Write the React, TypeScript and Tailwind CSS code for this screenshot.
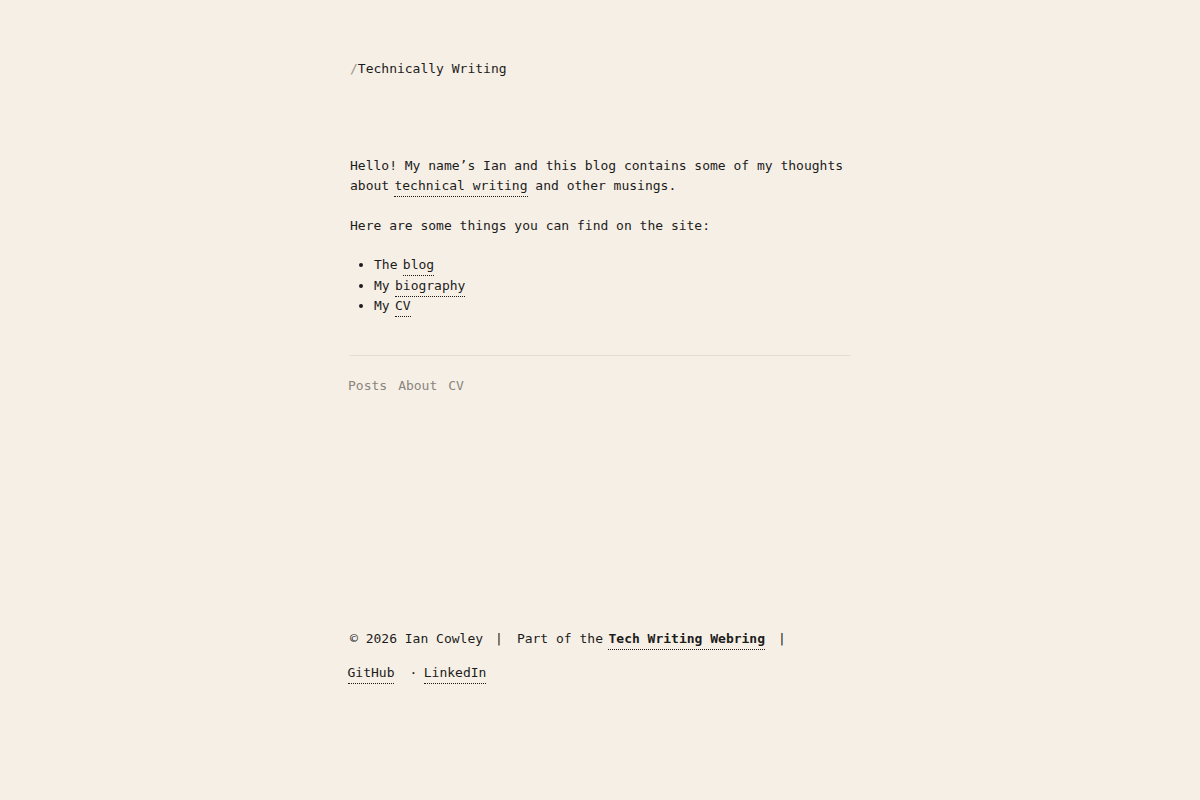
const mono = { fontFamily: '"DejaVu Sans Mono", "Liberation Mono", monospace' };

// links sit a couple of pixels left of where the preceding space puts them
function DottedLink({ children, bold }: { children: React.ReactNode; bold?: boolean }) {
  return (
    <a
      href="#"
      className={`-ml-[2.5px] border-b border-dotted border-[#1c1c1c] pb-[3px] text-[#1c1c1c] ${bold ? 'font-bold' : ''}`}
    >
      {children}
    </a>
  );
}

export default function App() {
  return (
    <div className="min-h-screen w-full bg-[#f6efe5] text-[13px] leading-[20px] text-[#1c1c1c]" style={mono}>
      <div className="mx-auto w-[500px] pt-[59px]">
        <header>
          <a href="#" className="text-[#1c1c1c]">
            <span className="text-[#9a948c]">/</span>Technically Writing
          </a>
        </header>

        <main className="mt-[77px]">
          <p>
            Hello! My name’s Ian and this blog contains some of my thoughts about{' '}
            <DottedLink>technical writing</DottedLink> and other musings.
          </p>
          <p className="mt-[20px]">Here are some things you can find on the site:</p>
          <ul className="mt-[19px] list-disc pl-[24px] leading-[20.5px]">
            <li>
              The <DottedLink>blog</DottedLink>
            </li>
            <li>
              My <DottedLink>biography</DottedLink>
            </li>
            <li>
              My <DottedLink>CV</DottedLink>
            </li>
          </ul>
        </main>

        <hr className="mt-[38px] border-0 border-t border-[#e4dccf]" />

        <nav className="-ml-[2px] mt-[20px] flex gap-[11px] text-[#8a857e]">
          <a href="#">Posts</a>
          <a href="#">About</a>
          <a href="#">CV</a>
        </nav>

        <footer className="mt-[233px]">
          <div className="flex items-baseline">
            <span>© 2026 Ian Cowley</span>
            <span className="ml-[12px]">|</span>
            <span className="ml-[14px]">Part of the</span>
            <span className="ml-[8px]">
              <DottedLink bold>Tech Writing Webring</DottedLink>
            </span>
            <span className="ml-[13px]">|</span>
          </div>
          <div className="mt-[14px] flex items-baseline">
            <span>
              <DottedLink>GitHub</DottedLink>
            </span>
            <span className="ml-[15px]">·</span>
            <span className="ml-[9px]">
              <DottedLink>LinkedIn</DottedLink>
            </span>
          </div>
        </footer>
      </div>
    </div>
  );
}
